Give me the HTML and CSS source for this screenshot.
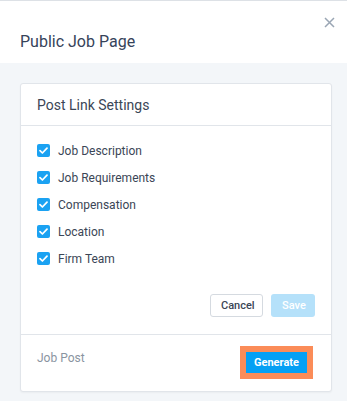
FILE: index.html
```html
<!doctype html>
<html>
  <head>
    <meta name="viewport" content="width=device-width, initial-scale=1.0" />
    <title>Public Job Page</title>
    <link rel="stylesheet" href="styles.css">
  </head>
  <body>
    <div class="modal">
      <div class="modal-header">
        <h1>Public Job Page</h1>
        <button class="close" aria-label="Close">
          <svg width="11" height="11" viewBox="0 0 11 11"><path d="M1 1L10 10M10 1L1 10" stroke="#9aa6b4" stroke-width="1.5" fill="none" /></svg>
        </button>
      </div>

      <div class="modal-body">
        <div class="card">
          <div class="card-header">Post Link Settings</div>

          <div class="card-body">
            <ul class="options">
              <li><span class="check"><svg width="9" height="7" viewBox="0 0 9 7"><path d="M1 3.6L3.4 6L8 1.2" stroke="#fff" stroke-width="1.7" fill="none" stroke-linecap="round" stroke-linejoin="round" /></svg></span>Job Description</li>
              <li><span class="check"><svg width="9" height="7" viewBox="0 0 9 7"><path d="M1 3.6L3.4 6L8 1.2" stroke="#fff" stroke-width="1.7" fill="none" stroke-linecap="round" stroke-linejoin="round" /></svg></span>Job Requirements</li>
              <li><span class="check"><svg width="9" height="7" viewBox="0 0 9 7"><path d="M1 3.6L3.4 6L8 1.2" stroke="#fff" stroke-width="1.7" fill="none" stroke-linecap="round" stroke-linejoin="round" /></svg></span>Compensation</li>
              <li><span class="check"><svg width="9" height="7" viewBox="0 0 9 7"><path d="M1 3.6L3.4 6L8 1.2" stroke="#fff" stroke-width="1.7" fill="none" stroke-linecap="round" stroke-linejoin="round" /></svg></span>Location</li>
              <li><span class="check"><svg width="9" height="7" viewBox="0 0 9 7"><path d="M1 3.6L3.4 6L8 1.2" stroke="#fff" stroke-width="1.7" fill="none" stroke-linecap="round" stroke-linejoin="round" /></svg></span>Firm Team</li>
            </ul>

            <div class="actions">
              <button class="btn btn-cancel">Cancel</button>
              <button class="btn btn-save" disabled>Save</button>
            </div>
          </div>

          <div class="card-footer">
            <span class="footer-label">Job Post</span>
            <div class="highlight">
              <button class="btn btn-generate">Generate</button>
            </div>
          </div>
        </div>
      </div>
    </div>
  </body>
</html>
```

FILE: styles.css
```css
html,
body {
  margin: 0;
  height: 100%;
  background: #f3f6f9;
  color: #3b4656;
  font-family: Roboto, 'Liberation Sans', sans-serif;
}

.modal {
  border-top: 1px solid #dde1e6;
}

.modal-header {
  position: relative;
  height: 62px;
  box-sizing: border-box;
  padding: 31px 20px 0;
  background: #fff;
}

.modal-header h1 {
  margin: 0;
  font-size: 16px;
  line-height: 20px;
  font-weight: 400;
  color: #36435a;
}

.close {
  position: absolute;
  top: 16px;
  right: 12px;
  padding: 0;
  border: 0;
  background: none;
  line-height: 0;
}

.modal-body {
  padding: 20px 15px 10px 20px;
}

.card {
  background: #fff;
  border: 1px solid #e1e5ea;
  border-radius: 3px;
  box-shadow: 0 1px 2px rgba(0, 0, 0, 0.04);
}

.card-header {
  height: 42px;
  box-sizing: border-box;
  padding: 12px 16px 0;
  font-size: 14px;
  line-height: 18px;
  border-bottom: 1px solid #e1e5ea;
}

.card-body {
  padding: 11px 16px 17px;
  border-bottom: 1px solid #e1e5ea;
}

.options {
  list-style: none;
  margin: 0;
  padding: 0;
}

.options li {
  display: flex;
  align-items: center;
  gap: 8px;
  height: 27px;
  font-size: 12px;
}

.check {
  display: flex;
  align-items: center;
  justify-content: center;
  width: 13px;
  height: 13px;
  border-radius: 2px;
  background: #1ba2f2;
}

.actions {
  display: flex;
  justify-content: flex-end;
  gap: 8px;
  margin-top: 22px;
}

.btn {
  font-family: inherit;
  font-size: 11px;
  font-weight: 500;
  height: 23px;
  padding: 0 10px;
  border-radius: 3px;
  border: 1px solid transparent;
}

.btn-cancel {
  background: #fff;
  border-color: #d5dae0;
  color: #3b4656;
  width: 53px;
}

.btn-save {
  background: #b5e1fa;
  color: #fff;
  width: 44px;
}

.card-footer {
  display: flex;
  justify-content: space-between;
  align-items: flex-start;
  padding: 11px 18px 12px 16px;
}

.footer-label {
  margin-top: 5px;
  font-size: 12px;
  line-height: 14px;
  color: #8a94a1;
}

.highlight {
  border: 6px solid #fb8c58;
  line-height: 0;
}

.btn-generate {
  width: 61px;
  height: 21px;
  padding: 0;
  border: 0;
  border-radius: 0;
  background: #05a0f4;
  color: #fff;
  font-weight: 700;
}
```
